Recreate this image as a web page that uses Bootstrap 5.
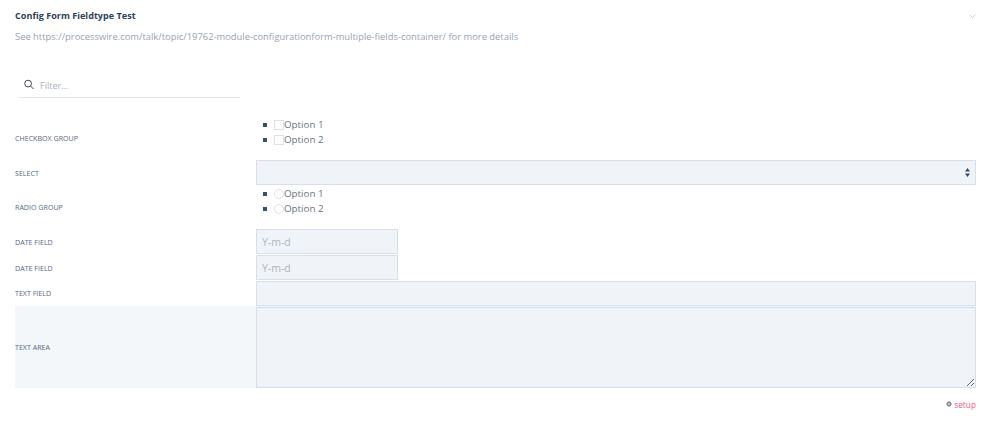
<!DOCTYPE html>
<html lang="en">
<head>
  <meta charset="UTF-8" />
  <meta name="viewport" content="width=device-width, initial-scale=1.0"/>
  <title>Config Form Fieldtype Test</title>
  <link href="https://cdn.jsdelivr.net/npm/bootstrap@5.3.0/dist/css/bootstrap.min.css" rel="stylesheet">
  <style>
    body {
      font-family: "Open Sans", "Noto Sans", sans-serif;
      font-size: 11px;
      color: #354b60;
      background: #fff;
    }
    .page-wrap { padding: 0 24px 0 15px; }
    .panel-head { height: 29px; padding-top: 9px; }
    .panel-title { font-size: 9.1px; line-height: 14px; font-weight: 700; color: #2f4258; margin: 0; }
    .panel-toggle { margin-top: 4px; }
    .panel-desc { font-size: 9.4px; color: #97a4b3; height: 16px; line-height: 16px; margin: 0; }
    .filter-box {
      width: 222px;
      height: 27px;
      margin: 26px 0 19px 3px;
      padding-left: 6px;
      gap: 6px;
      border-bottom: 1px solid #e6e6e6;
    }
    .filter-box input {
      border: 0;
      outline: 0;
      padding: 4px 0 0;
      width: 180px;
      font-size: 9px;
      color: #8d9cad;
      background: transparent;
    }
    .filter-box input::placeholder { color: #a9b2bc; opacity: 1; }
    .field-label {
      flex: 0 0 241px;
      font-size: 7.1px;
      text-transform: uppercase;
      color: #566a7c;
    }
    .field-body { flex: 1 1 auto; min-width: 0; }
    .field-alt { background: #f4f7f9; }
    .opt-list {
      margin: 0 0 13px;
      padding: 0 0 0 7px;
      list-style: none;
      font-size: 9.8px;
      line-height: 15px;
      color: #68757f;
    }
    .opt-list li { display: flex; align-items: center; height: 15px; }
    .opt-list li::before {
      content: "";
      width: 4px;
      height: 4px;
      margin-right: 7px;
      background: #3b4f66;
    }
    .opt-list label { display: flex; align-items: center; margin: 0; }
    .opt-list input {
      appearance: none;
      width: 10px;
      height: 10px;
      margin: 0;
      border: 1px solid #e0e0e0;
      background: #fff;
    }
    .opt-list input[type="radio"] { border-radius: 50%; }
    .fake-input {
      display: block;
      height: 25px;
      margin-bottom: 1px;
      border: 1px solid #d6e0ec;
      border-radius: 0;
      background-color: #f0f3f8;
      font-size: 10.5px;
      color: #5c6b7a;
      padding: 0 5px;
      outline: 0;
      width: 100%;
    }
    .fake-input::placeholder { color: #adb5be; opacity: 1; }
    .fake-date { width: 142px; }
    .fake-area { height: 81px; margin: 1px 0 0; padding: 5px; }
    .fake-select {
      appearance: none;
      background-image: url("data:image/svg+xml,%3Csvg xmlns='http://www.w3.org/2000/svg' width='5' height='9'%3E%3Cpath d='M2.5 0 5 3.500H0zM2.5 9 0 5.500H5z' fill='%23354b60'/%3E%3C/svg%3E");
      background-repeat: no-repeat;
      background-position: right 5px center;
    }
    .setup-row { margin-top: 11px; font-size: 8.3px; gap: 2px; }
    .setup-row a { color: #f0587f; text-decoration: none; }
    .setup-gear { margin-top: -3px; }
  </style>
</head>
<body>
  <div class="page-wrap">
    <!-- Header -->
    <div class="panel-head d-flex justify-content-between align-items-start">
      <h2 class="panel-title">Config Form Fieldtype Test</h2>
      <svg class="panel-toggle" width="7" height="12" viewBox="0 0 7 12"><path d="M.5 1.500 3.500 4.500 6.500 1.500" fill="none" stroke="#cfd6e0" stroke-width="1"/></svg>
    </div>
    <p class="panel-desc">See https://processwire.com/talk/topic/19762-module-configurationform-multiple-fields-container/ for more details</p>

    <!-- Filter -->
    <div class="filter-box d-flex align-items-center">
      <svg width="10" height="11" viewBox="0 0 11 11"><circle cx="4.500" cy="4.500" r="3.700" fill="none" stroke="#3c4650" stroke-width="1.100"/><path d="M7.300 7.300 10.500 10.500" stroke="#3c4650" stroke-width="1.100"/></svg>
      <input type="text" placeholder="Filter...">
    </div>

    <!-- Fields -->
    <div class="d-flex align-items-center">
      <div class="field-label">Checkbox Group</div>
      <div class="field-body">
        <ul class="opt-list">
          <li><label><input type="checkbox">Option 1</label></li>
          <li><label><input type="checkbox">Option 2</label></li>
        </ul>
      </div>
    </div>
    <div class="d-flex align-items-center">
      <div class="field-label">Select</div>
      <div class="field-body"><select class="fake-input fake-select"></select></div>
    </div>
    <div class="d-flex align-items-center">
      <div class="field-label">Radio Group</div>
      <div class="field-body">
        <ul class="opt-list">
          <li><label><input type="radio" name="rg">Option 1</label></li>
          <li><label><input type="radio" name="rg">Option 2</label></li>
        </ul>
      </div>
    </div>
    <div class="d-flex align-items-center">
      <div class="field-label">Date Field</div>
      <div class="field-body"><input class="fake-input fake-date" type="text" placeholder="Y-m-d"></div>
    </div>
    <div class="d-flex align-items-center">
      <div class="field-label">Date Field</div>
      <div class="field-body"><input class="fake-input fake-date" type="text" placeholder="Y-m-d"></div>
    </div>
    <div class="d-flex align-items-center">
      <div class="field-label">Text Field</div>
      <div class="field-body"><input class="fake-input mb-0" type="text"></div>
    </div>
    <div class="d-flex align-items-center field-alt">
      <div class="field-label">Text Area</div>
      <div class="field-body d-flex"><textarea class="fake-input fake-area"></textarea></div>
    </div>

    <!-- Setup link -->
    <div class="setup-row d-flex justify-content-end align-items-center">
      <svg class="setup-gear" width="6" height="6" viewBox="0 0 8 8"><circle cx="4" cy="4" r="2.500" fill="none" stroke="#8a8a8a" stroke-width="1.500"/><path d="M4 0V8M0 4H8M1.200 1.200 6.800 6.800M6.800 1.200 1.200 6.800" stroke="#8a8a8a" stroke-width="1"/><circle cx="4" cy="4" r="1" fill="#fff"/></svg>
      <a href="#">setup</a>
    </div>
  </div>
  <script src="https://cdn.jsdelivr.net/npm/bootstrap@5.3.0/dist/js/bootstrap.bundle.min.js"></script>
</body>
</html>
